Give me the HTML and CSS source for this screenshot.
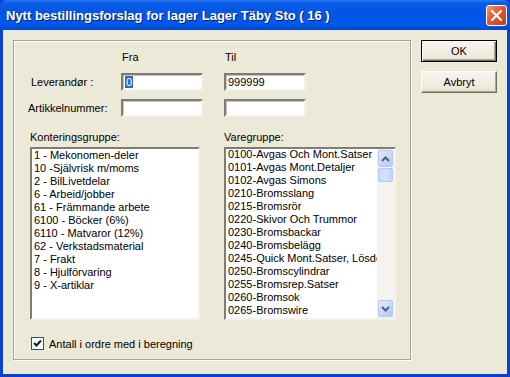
FILE: index.html
```html
<!DOCTYPE html>
<html lang="no">
<head>
  <meta charset="UTF-8">
  <title>Nytt bestillingsforslag</title>
  <link rel="stylesheet" href="styles.css">
</head>
<body>

<div class="window">
  <div class="titlebar">
    <span class="title">Nytt bestillingsforslag for lager Lager Täby Sto ( 16 )</span>
    <span class="close-btn">
      <svg width="13" height="13" viewBox="0 0 13 13"><path d="M2 2 L11 11 M11 2 L2 11" stroke="#fff" stroke-width="2.2" stroke-linecap="round"/></svg>
    </span>
  </div>

  <div class="body">
    <!-- GROUP BOX -->
    <div class="group">
      <div class="range">
        <span></span><span class="col-head">Fra</span><span></span><span class="col-head">Til</span>

        <label class="lbl lbl-lev">Leverandør :</label>
        <div class="field"><span class="sel">0</span></div>
        <span></span>
        <div class="field">999999</div>

        <label class="lbl lbl-art">Artikkelnummer:</label>
        <div class="field"></div>
        <span></span>
        <div class="field"></div>
      </div>

      <div class="lists">
        <div class="list-col">
          <div class="list-label">Konteringsgruppe:</div>
          <div class="listbox">
            <div class="item">1 - Mekonomen-deler</div>
            <div class="item">10 -Självrisk m/moms</div>
            <div class="item">2 - BilLivetdelar</div>
            <div class="item">6 - Arbeid/jobber</div>
            <div class="item">61 - Främmande arbete</div>
            <div class="item">6100 - Böcker (6%)</div>
            <div class="item">6110 - Matvaror (12%)</div>
            <div class="item">62 - Verkstadsmaterial</div>
            <div class="item">7 - Frakt</div>
            <div class="item">8 - Hjulförvaring</div>
            <div class="item">9 - X-artiklar</div>
          </div>
        </div>

        <div class="list-col right">
          <div class="list-label">Varegruppe:</div>
          <div class="listbox scroll">
            <div class="items">
              <div class="item">0100-Avgas Och Mont.Satser</div>
              <div class="item">0101-Avgas Mont.Detaljer</div>
              <div class="item">0102-Avgas Simons</div>
              <div class="item">0210-Bromsslang</div>
              <div class="item">0215-Bromsrör</div>
              <div class="item">0220-Skivor Och Trummor</div>
              <div class="item">0230-Bromsbackar</div>
              <div class="item">0240-Bromsbelägg</div>
              <div class="item">0245-Quick Mont.Satser, Lösdelar</div>
              <div class="item">0250-Bromscylindrar</div>
              <div class="item">0255-Bromsrep.Satser</div>
              <div class="item">0260-Bromsok</div>
              <div class="item">0265-Bromswire</div>
              <div class="item">0266-Bromsvajer Hjul</div>
            </div>
            <div class="scrollbar">
              <div class="sb-btn">
                <svg width="9" height="6" viewBox="0 0 9 6"><path d="M1 5 L4.5 1.5 L8 5" fill="none" stroke="#4D6185" stroke-width="2"/></svg>
              </div>
              <div class="sb-thumb"></div>
              <div class="sb-track"></div>
              <div class="sb-btn">
                <svg width="9" height="6" viewBox="0 0 9 6"><path d="M1 1 L4.5 4.5 L8 1" fill="none" stroke="#4D6185" stroke-width="2"/></svg>
              </div>
            </div>
          </div>
        </div>
      </div>

      <div class="check-row">
        <span class="checkbox">
          <svg width="9" height="9" viewBox="0 0 9 9"><path d="M1 4 L3.5 6.5 L8 1.5" fill="none" stroke="#1a1a1a" stroke-width="2"/></svg>
        </span>
        <span>Antall i ordre med i beregning</span>
      </div>
    </div>

    <!-- BUTTONS -->
    <div class="buttons">
      <button class="btn default">OK</button>
      <button class="btn">Avbryt</button>
    </div>
  </div>
</div>

</body>
</html>
```

FILE: styles.css
```css
body {
  margin: 0;
  font-family: "Liberation Sans", Arial, sans-serif;
  font-size: 11px;
  color: #000;
  background: #ece9d8;
}
.window {
  width: 510px;
  height: 377px;
  display: flex;
  flex-direction: column;
  background: #0841d0;
}
.titlebar {
  height: 30px;
  flex: none;
  display: flex;
  align-items: center;
  justify-content: space-between;
  padding: 0 3px 0 6px;
  background: linear-gradient(#2b7cf5 0, #0a5ce8 10%, #0055e5 45%, #0059ee 80%, #0047cc 100%);
  border-radius: 7px 7px 0 0;
}
.title {
  color: #fff;
  font-weight: 700;
  font-size: 13px;
  text-shadow: 1px 1px 0 #0a1f6a;
  margin-top: 1px;
}
.close-btn {
  width: 19px;
  height: 19px;
  display: flex;
  align-items: center;
  justify-content: center;
  border: 1px solid #fff;
  border-radius: 3px;
  background: linear-gradient(135deg, #f09a76 0, #e2592f 45%, #c43d16 100%);
  margin-top: 1px;
}
.body {
  flex: 1;
  margin: 0 3px 3px;
  background: #ece9d8;
  display: flex;
  align-items: flex-start;
  padding: 10px 0 0 10px;
}
.group {
  width: 396px;
  height: 318px;
  border: 1px solid #a6a496;
  box-shadow: 1px 1px 0 #fff, inset 1px 1px 0 #fff;
  display: flex;
  flex-direction: column;
}
.range {
  display: grid;
  grid-template-columns: 107px 82px 21px 82px;
  grid-template-rows: 13px 18px 18px;
  row-gap: 8px;
  margin-top: 11px;
  align-items: center;
}
.range .col-head {
  padding-left: 1px;
  align-self: start;
  margin-top: -1px;
}
.lbl-lev { padding-left: 17px; }
.lbl-art { padding-left: 14px; }
.field {
  height: 14px;
  line-height: 14px;
  padding: 0 2px;
  background: #fff;
  border-top: 2px solid #7f7d73;
  border-left: 2px solid #7f7d73;
  border-bottom: 2px solid #f2f1ea;
  border-right: 2px solid #f2f1ea;
  box-shadow: inset 1px 1px 0 #c8c6bb;
}
.sel {
  background: #316ac5;
  color: #fff;
  padding: 0 1px;
}
.lists {
  display: flex;
  gap: 24px;
  margin: 14px 0 0 16px;
}
.list-label {
  height: 13px;
  line-height: 13px;
  margin-bottom: 3px;
}
.list-col { width: 170px; }
.list-col.right { width: 172px; }
.listbox {
  height: 167px;
  background: #fff;
  border-top: 2px solid #7f7d73;
  border-left: 2px solid #7f7d73;
  border-bottom: 2px solid #f2f1ea;
  border-right: 2px solid #f2f1ea;
  padding: 0 0 2px 2px;
  overflow: hidden;
  box-sizing: content-box;
  width: 164px;
}
.list-col.right .listbox { width: 166px; }
.listbox.scroll {
  display: flex;
  padding: 0 0 0 2px;
  height: 169px;
}
.listbox.scroll .items {
  flex: 1;
  overflow: hidden;
  white-space: nowrap;
  margin-top: -1px;
}
.item {
  height: 13px;
  line-height: 13px;
  white-space: nowrap;
}
.scrollbar {
  width: 17px;
  flex: none;
  display: flex;
  flex-direction: column;
  background: #f4f3ee;
  padding: 1px 0;
}
.sb-btn {
  height: 15px;
  margin: 0 1px;
  border: 1px solid #b5c8f3;
  border-radius: 2px;
  background: linear-gradient(135deg, #e4ecff 0, #c6d6fb 60%, #b4c8f6 100%);
  display: flex;
  align-items: center;
  justify-content: center;
}
.sb-thumb {
  height: 12px;
  margin: 1px 1px 0;
  border: 1px solid #b5c8f3;
  border-radius: 2px;
  background: linear-gradient(90deg, #c9d8fc, #d6e2ff 50%, #c1d2fb);
}
.sb-track { flex: 1; }
.check-row {
  display: flex;
  align-items: center;
  gap: 5px;
  margin: 17px 0 0 17px;
}
.checkbox {
  width: 11px;
  height: 11px;
  border: 1px solid #1c5180;
  background: #fff;
  display: flex;
  align-items: center;
  justify-content: center;
}
.buttons {
  display: flex;
  flex-direction: column;
  gap: 9px;
  margin-left: 10px;
}
.btn {
  width: 76px;
  height: 22px;
  font-family: "Liberation Sans", Arial, sans-serif;
  font-size: 11px;
  color: #000;
  background: linear-gradient(#f6f5f0, #ece9d8 85%, #dcd8c6);
  border: 1px solid;
  border-color: #fff #716f64 #716f64 #fff;
  box-shadow: inset -1px -1px 0 #aca899;
  padding: 0;
}
.btn.default {
  border: 1px solid #000;
  box-shadow: inset 1px 1px 0 #fff, inset -1px -1px 0 #716f64, inset -2px -2px 0 #aca899;
}
```
